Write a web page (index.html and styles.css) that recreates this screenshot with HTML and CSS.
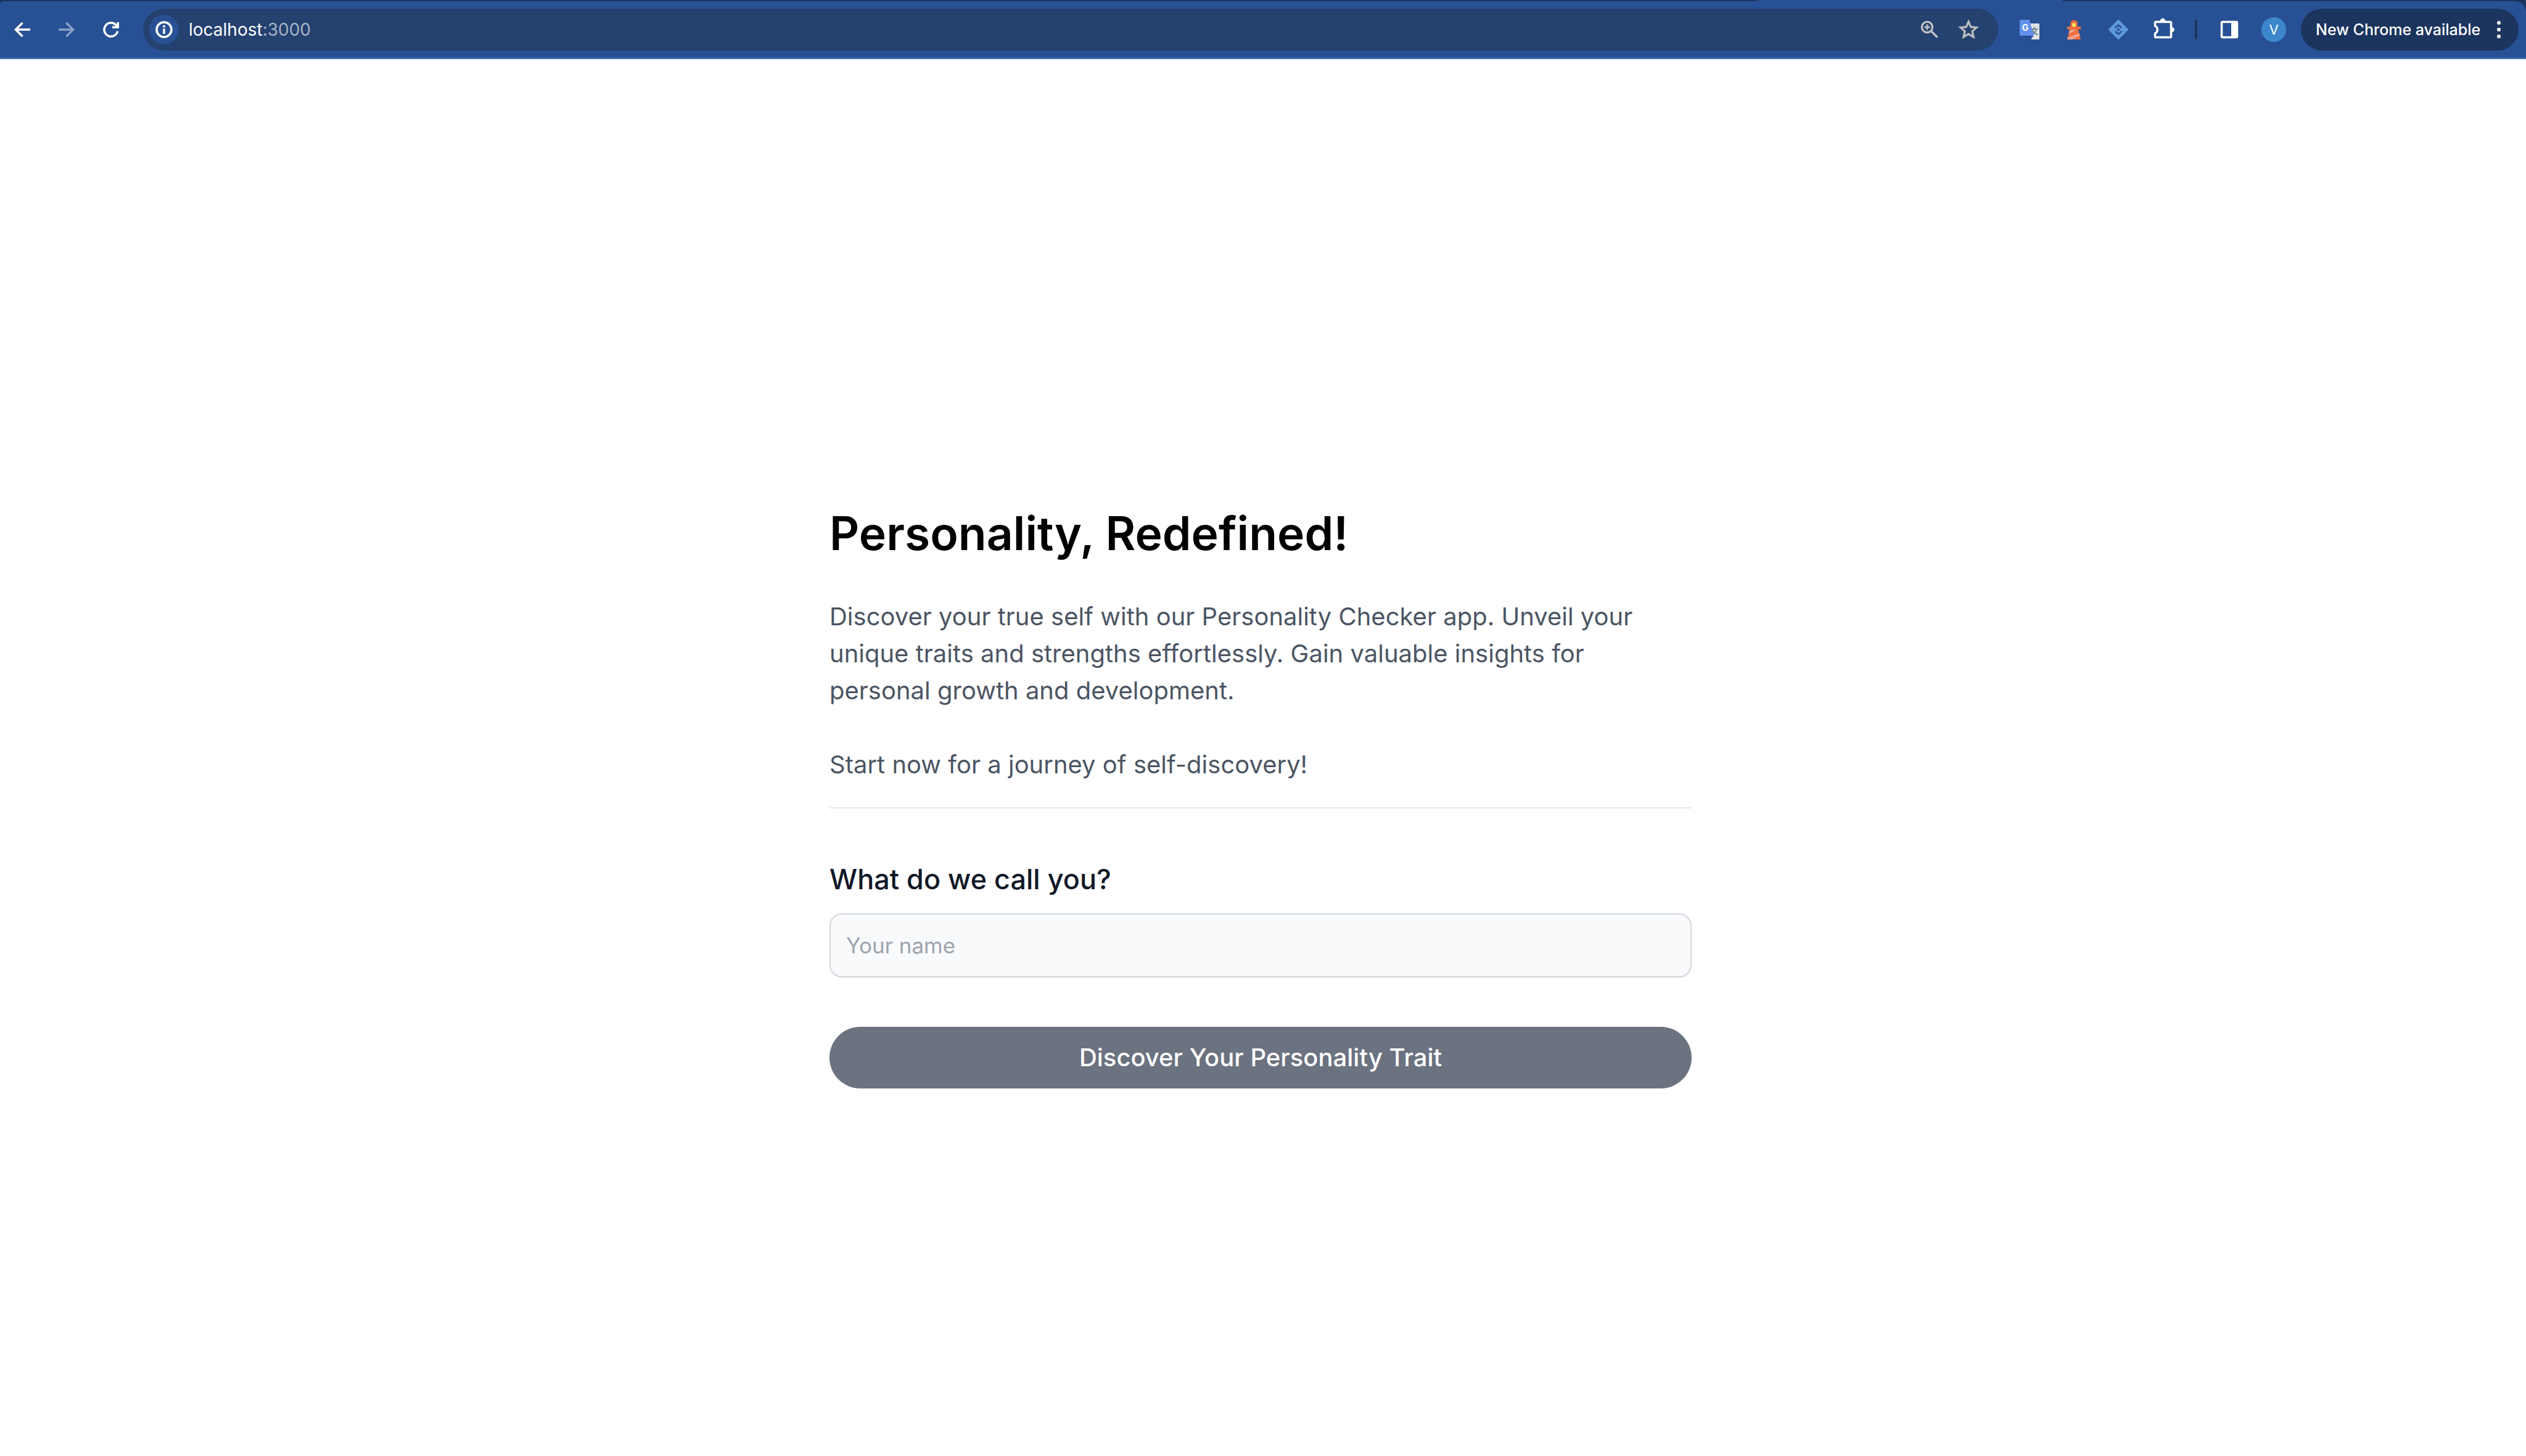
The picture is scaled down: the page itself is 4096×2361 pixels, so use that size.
FILE: index.html
```html
<!DOCTYPE html>
<html lang="en">
<head>
<meta charset="utf-8">
<title>Personality, Redefined!</title>
<link rel="stylesheet" href="styles.css">
</head>
<body>
<header class="browser">
  <div class="tab-strip"><div class="active-tab"></div></div>
  <div class="toolbar">
    <button class="tool" type="button" aria-label="Back">
      <svg class="icon" viewBox="0 0 48 48"><path class="line" d="M37 24H14M24.5 13 13.5 24l11 11"/></svg>
    </button>
    <button class="tool faded" type="button" aria-label="Forward">
      <svg class="icon" viewBox="0 0 48 48"><path class="line" d="M11 24h23M23.5 13l11 11-11 11"/></svg>
    </button>
    <button class="tool" type="button" aria-label="Reload">
      <svg class="icon" viewBox="0 0 48 48"><path class="line" d="M34.7 26.7A11 11 0 1 1 32 16.5"/><path fill="#fff" d="M33.5 12H37v10H26v-3.6h4l3.5-3.4z"/></svg>
    </button>
    <div class="address">
      <button class="site-info" type="button" aria-label="View site information">
        <svg class="icon" viewBox="0 0 48 48"><circle class="line" cx="24" cy="24" r="12"/><path fill="#fff" d="M22.3 22.4h3.4V31h-3.4zM22.3 17h3.4v3.4h-3.4z"/></svg>
      </button>
      <div class="url">localhost<span class="port">:3000</span></div>
      <button class="inline-tool" type="button" aria-label="Zoom">
        <svg class="icon" viewBox="0 0 48 48"><g fill="none" stroke="#bfbfbf"><circle cx="21" cy="20" r="8.6" stroke-width="3.4"/><path stroke-width="2.8" d="M16.5 20h9M21 15.500v9"/><path stroke-width="3.600" d="M27 26l10.500 10.500"/></g></svg>
      </button>
      <button class="inline-tool" type="button" aria-label="Bookmark this tab">
        <svg class="icon" viewBox="0 0 48 48"><path fill="#bfbfbf" stroke="#bfbfbf" stroke-width=".4" transform="translate(4.500 4.500) scale(1.630)" d="M22 9.240l-7.190-.62L12 2 9.190 8.630 2 9.240l5.460 4.730L5.820 21 12 17.270 18.180 21l-1.630-7.030L22 9.240zM12 15.400l-3.760 2.270 1-4.280-3.320-2.880 4.380-.38L12 6.100l1.710 4.040 4.380.38-3.320 2.880 1 4.280L12 15.400z"/></svg>
      </button>
    </div>
    <div class="extensions">
      <button class="tool" type="button" aria-label="Translate">
        <svg class="icon" viewBox="0 0 48 48"><path fill="#dfe1e3" d="M25 14h13.500a1.500 1.500 0 0 1 1.500 1.500v23a1.500 1.500 0 0 1-1.500 1.500H27z"/><text x="31.500" y="31" class="glyph-han">文</text><path fill="#3d49b8" d="M24.500 33.500H31L26 39.500z"/><path fill="#6190ee" d="M9.500 8H23.500l7.500 25.700H9.500A1.500 1.500 0 0 1 8 32.200V9.500A1.500 1.500 0 0 1 9.500 8z"/><text x="17" y="26" class="glyph-g">G</text></svg>
      </button>
      <button class="tool" type="button" aria-label="Lighthouse">
        <svg class="icon" viewBox="0 0 48 48"><path fill="#ee6e3f" d="M24 8l5.700 3.500V19H35v4.500h-4.300L35 40H13l4.300-16.500H13V19h5.300v-7.500z"/><path fill="#fff965" d="M21.300 13.700h5.400V19h-5.400z"/><path fill="#f4a58a" d="M17 24.500h11.500L15.300 31zM32.500 30l1 3.900L21.300 40H13l.800-3z"/></svg>
      </button>
      <button class="tool" type="button" aria-label="Diamond extension">
        <svg class="icon" viewBox="0 0 48 48"><path fill="#5e99db" stroke="#5e99db" stroke-width="2" stroke-linejoin="round" d="M24 9l15 15-15 15L9 24z"/><path fill="none" stroke="#285195" stroke-width="2.800" d="M18.700 21.200 24 16.500l5.300 4.700M18.700 26.800 24 31.500l5.300-4.700"/><path fill="#285195" d="M24 21.200l2.800 2.800-2.800 2.800-2.800-2.800z"/></svg>
      </button>
      <button class="tool" type="button" aria-label="Extensions">
        <svg class="icon" viewBox="0 0 48 48"><path class="line" stroke-linejoin="round" d="M11.500 18V13a1.500 1.500 0 0 1 1.500-1.500H36a1.500 1.500 0 0 1 1.500 1.500V35a1.500 1.500 0 0 1-1.500 1.500H13a1.500 1.500 0 0 1-1.500-1.500V30C16.500 28 16.500 20 11.500 18z"/><path fill="#fff" d="M19.700 11a4.300 5.500 0 0 1 8.600 0zM38 19.700a4.800 4.300 0 0 1 0 8.600z"/></svg>
      </button>
      <span class="divider"></span>
      <button class="tool" type="button" aria-label="Side panel">
        <svg class="icon" viewBox="0 0 48 48"><rect class="line" x="11.500" y="11.500" width="25" height="25" rx="1.500"/><path fill="#fff" d="M27 11h10v26H27z"/></svg>
      </button>
      <button class="tool" type="button" aria-label="Profile"><span class="avatar">V</span></button>
    </div>
    <button class="update" type="button">
      <span>New Chrome available</span>
      <svg class="dots" viewBox="0 0 8 28"><g fill="#fff"><circle cx="4" cy="3" r="3"/><circle cx="4" cy="14" r="3"/><circle cx="4" cy="25" r="3"/></g></svg>
    </button>
  </div>
</header>
<main class="page">
  <div class="card">
    <h1 class="title">Personality, Redefined!</h1>
    <div class="intro">
      <p>Discover your true self with our Personality Checker app. Unveil your unique traits and strengths effortlessly. Gain valuable insights for personal growth and development.</p>
      <p>Start now for a journey of self-discovery!</p>
    </div>
    <hr class="rule">
    <form class="form">
      <div class="field">
        <label class="label" for="name">What do we call you?</label>
        <input class="input" id="name" type="text" placeholder="Your name">
      </div>
      <button class="submit" type="submit">Discover Your Personality Trait</button>
    </form>
  </div>
</main>
</body>
</html>
```
FILE: styles.css
```css
* { box-sizing: border-box; margin: 0; }

body {
  display: flex;
  flex-direction: column;
  min-height: 100vh;
  background: #fff;
  color: #000;
  font-family: Inter, "Liberation Sans", sans-serif;
  font-optical-sizing: none;
}

button, input { font: inherit; font-optical-sizing: none; }

button {
  border: 0;
  padding: 0;
  background: none;
  color: #fff;
  cursor: pointer;
}

/* Browser chrome */
.browser { background: #1b355f; }

.tab-strip {
  display: flex;
  justify-content: flex-end;
  height: 2px;
  padding-right: 751px;
}

.active-tab { width: 496px; background: #285195; }

.toolbar {
  display: flex;
  align-items: center;
  height: 94px;
  padding-right: 12px;
  border-bottom: 2px solid #5377b0;
  border-radius: 6px 18px 0 0;
  background: #285195;
}

.tool {
  display: flex;
  align-items: center;
  justify-content: center;
  width: 72px;
  height: 68px;
}

.faded { opacity: .45; }

.icon { display: block; width: 48px; height: 48px; }

.line { fill: none; stroke: #fff; stroke-width: 3.5; }

.glyph-g {
  fill: #fff;
  font-size: 14px;
  font-weight: 700;
  text-anchor: middle;
}

.glyph-han {
  fill: #607988;
  font-family: "Noto Sans CJK SC", sans-serif;
  font-size: 13px;
  font-weight: 700;
  text-anchor: middle;
}

.address {
  display: flex;
  flex: 1;
  align-items: center;
  gap: 16px;
  height: 68px;
  margin: 0 15px 0 16px;
  padding: 0 24px 0 10px;
  border-radius: 34px;
  background: #24416f;
}

.site-info { border-radius: 50%; background: #285195; }

.url { flex: 1; color: #fff; font-size: 28px; line-height: 40px; }

.port { color: #a7b3c5; }

.extensions { display: flex; align-items: center; margin-right: 8px; }

.divider {
  width: 4px;
  height: 32px;
  margin: 0 16px;
  border-radius: 2px;
  background: #1b355f;
}

.avatar {
  width: 40px;
  height: 40px;
  border-radius: 50%;
  background: #3c87cb;
  font-size: 22px;
  line-height: 40px;
  text-align: center;
}

.update {
  display: flex;
  align-items: center;
  justify-content: space-between;
  width: 353px;
  height: 68px;
  padding: 0 28px 0 24px;
  border-radius: 34px;
  background: #1b355f;
  font-size: 25px;
  font-weight: 500;
  white-space: nowrap;
}

.dots { width: 8px; height: 28px; }

/* Page */
.page {
  display: flex;
  flex: 1;
  align-items: center;
  justify-content: center;
  padding: 128px 8px 0 0;
}

.card { width: 100%; max-width: 1398px; }

.title {
  font-size: 75px;
  font-weight: 600;
  line-height: 90px;
}

.intro {
  display: grid;
  gap: 60px;
  margin: 60px 0 39px;
  color: #4b5563;
  font-size: 40px;
  line-height: 60px;
}

.rule { border: 0; border-top: 2px solid #e5e7eb; }

.form { display: grid; gap: 80px; margin-top: 80px; }

.field { display: grid; gap: 20px; }

.label {
  color: #111827;
  font-size: 45px;
  font-weight: 500;
  line-height: 70px;
}

.input {
  width: 100%;
  height: 104px;
  padding: 25px;
  border: 2px solid #d1d5db;
  border-radius: 20px;
  background: #f9fafb;
  color: #111827;
  font-size: 35px;
  line-height: 50px;
}

.input::placeholder { color: #9ca3af; opacity: 1; }

.submit {
  height: 100px;
  border-radius: 50px;
  background: #6b7280;
  font-size: 40px;
  font-weight: 500;
  line-height: 60px;
}
```
